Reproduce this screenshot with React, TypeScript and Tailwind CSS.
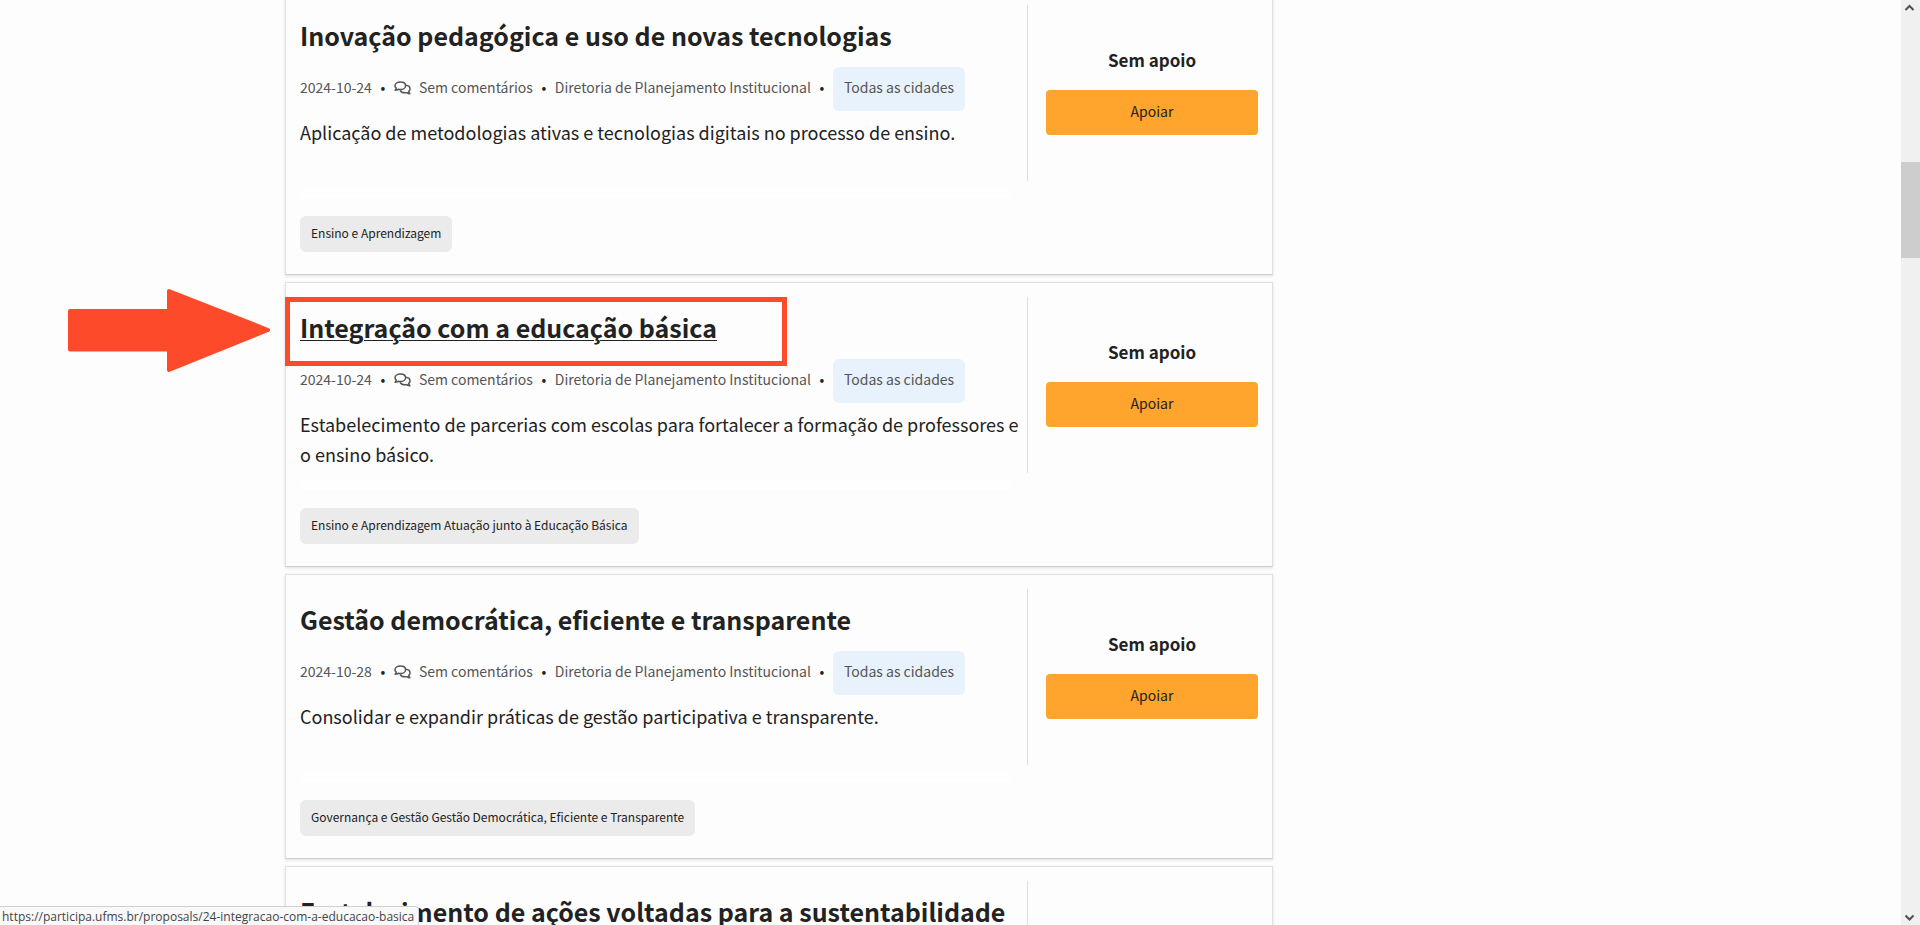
import React from "react";

type Proposal = {
  title: string;
  date: string;
  summary: string;
  tag: string;
  slug: string;
  hovered?: boolean;
};

const proposals: Proposal[] = [
  {
    title: "Inovação pedagógica e uso de novas tecnologias",
    date: "2024-10-24",
    summary: "Aplicação de metodologias ativas e tecnologias digitais no processo de ensino.",
    tag: "Ensino e Aprendizagem",
    slug: "inovacao-pedagogica",
  },
  {
    title: "Integração com a educação básica",
    date: "2024-10-24",
    summary:
      "Estabelecimento de parcerias com escolas para fortalecer a formação de professores e o ensino básico.",
    tag: "Ensino e Aprendizagem Atuação junto à Educação Básica",
    slug: "24-integracao-com-a-educacao-basica",
    hovered: true,
  },
  {
    title: "Gestão democrática, eficiente e transparente",
    date: "2024-10-28",
    summary: "Consolidar e expandir práticas de gestão participativa e transparente.",
    tag: "Governança e Gestão Gestão Democrática, Eficiente e Transparente",
    slug: "gestao-democratica",
  },
  {
    title: "Fortalecimento de ações voltadas para a sustentabilidade",
    date: "2024-10-28",
    summary: "",
    tag: "",
    slug: "sustentabilidade",
  },
];

function CommentsIcon() {
  return (
    <svg viewBox="0 0 17 14" className="mt-0.5 h-[14px] w-[17px]" fill="none" stroke="currentColor" strokeWidth="1.5" strokeLinejoin="round" aria-hidden="true">
      <path d="M6.300 1C3.300 1 1 2.600 1 4.700c0 1 .5 1.900 1.300 2.500C2.200 8 1.700 8.700 1.100 9.300c1.200 0 2.300-.4 3.100-1 .7.200 1.400.3 2.100.3 3 0 5.300-1.700 5.300-3.900S9.300 1 6.300 1z" />
      <path d="M11.600 4.300c2.500.2 4.400 1.700 4.400 3.600 0 1-.5 1.800-1.300 2.400.1.900.5 1.700 1.200 2.400-1.200 0-2.300-.4-3.100-1.100-.6.200-1.200.2-1.900.2-2.200 0-4-1-4.800-2.500" />
    </svg>
  );
}

function Bullet() {
  return <span className="w-[22px] text-center text-[#222]">•</span>;
}

function ProposalCard({ proposal }: { proposal: Proposal }) {
  return (
    <article className="flex h-[285px] shrink-0 border border-[#dee0e6] border-b-[#cdced3] bg-[#fdfdfd] px-[14px] pt-[14px] shadow-[0_1px_3px_rgba(0,0,0,0.12)]">
      <div className="flex min-w-0 flex-1 flex-col items-start">
        <div className="relative h-[62px] w-full pt-3">
          <h3 className="whitespace-nowrap text-[25px] font-bold leading-[36px] text-[#222]">
            <a
              href={`/proposals/${proposal.slug}`}
              className={proposal.hovered ? "underline decoration-1 underline-offset-2" : ""}
            >
              {proposal.title}
            </a>
          </h3>
          {proposal.hovered && (
            <>
              <div className="pointer-events-none absolute -left-[15px] top-0 h-[69px] w-[502px] border-[5px] border-[#ff4a2b]" />
              <svg viewBox="0 0 202 84" className="pointer-events-none absolute -left-[232px] -top-2 h-[84px] w-[202px]" fill="#fd4a2b" stroke="#fd4a2b" strokeWidth="4" strokeLinejoin="round" aria-hidden="true">
                <path d="M2 22H101V2L200 41 101 81V60.500H2z" />
              </svg>
            </>
          )}
        </div>
        <div className="flex h-11 items-center whitespace-nowrap pb-1 text-[14px] text-[#555]">
          <time>{proposal.date}</time>
          <Bullet />
          <CommentsIcon />
          <a href="#comentarios" className="ml-2">Sem comentários</a>
          <Bullet />
          <span>Diretoria de Planejamento Institucional</span>
          <Bullet />
          <span className="-mb-1 flex h-11 items-center rounded-md bg-[#e7f2fc] px-[11px] pb-1">Todas as cidades</span>
        </div>
        <p className="mt-1.5 h-[65px] text-[18px] leading-[30px] text-[#222]">{proposal.summary}</p>
        <div className="h-4 w-full pr-4">
          <div className="h-full bg-linear-to-b from-transparent to-white" />
        </div>
        {proposal.tag && (
          <a href="#tag" className="mt-[18px] flex h-9 items-center whitespace-nowrap rounded-md bg-[#ebebeb] px-[11px] pb-0.5 text-[12px] text-[#222]">
            {proposal.tag}
          </a>
        )}
      </div>
      <div className="flex h-[176px] w-[231px] shrink-0 flex-col border-l border-[#dee0e3] pl-[18px] pt-10">
        <p className="text-center text-[17px] font-bold leading-[30px] text-[#222]">Sem apoio</p>
        <button type="button" className="mt-[15px] h-[45px] rounded bg-[#ffa42d] pb-0.5 text-[14px] text-[#222]">
          Apoiar
        </button>
      </div>
    </article>
  );
}

function Scrollbar() {
  return (
    <div className="flex w-[19px] shrink-0 flex-col items-start bg-[#f0f0f0] text-[#505050]" aria-hidden="true">
      <svg viewBox="0 0 17 17" className="h-[17px] w-[17px]" fill="none" stroke="currentColor" strokeWidth="2">
        <path d="M4.500 10 8.500 6l4 4" />
      </svg>
      <div className="flex w-full flex-1 flex-col pt-[145px]">
        <div className="h-24 bg-[#cdcdcd]" />
      </div>
      <svg viewBox="0 0 17 17" className="h-[17px] w-[17px]" fill="none" stroke="currentColor" strokeWidth="2">
        <path d="M4.500 7.500l4 4 4-4" />
      </svg>
    </div>
  );
}

export default function App() {
  return (
    <div className="relative flex h-screen overflow-hidden bg-[#fdfdfd] font-['Noto_Sans_CJK_JP','Noto_Sans',sans-serif]">
      <main className="min-w-0 flex-1 overflow-hidden">
        <div className="mx-auto w-full max-w-[1331px]">
          <section className="-mt-[10px] flex max-w-[988px] flex-col gap-[7px]">
            {proposals.map((p) => (
              <ProposalCard key={p.slug} proposal={p} />
            ))}
          </section>
        </div>
      </main>
      <Scrollbar />
      <div className="absolute bottom-0 left-0 h-[19px] whitespace-nowrap rounded-tr-sm border-r border-t border-[#d0d0d0] bg-[#f9f9f9] pl-[2px] pr-1 font-['Open_Sans',sans-serif] text-[12px] leading-[20px] text-[#444]">
        https://participa.ufms.br/proposals/24-integracao-com-a-educacao-basica
      </div>
    </div>
  );
}
